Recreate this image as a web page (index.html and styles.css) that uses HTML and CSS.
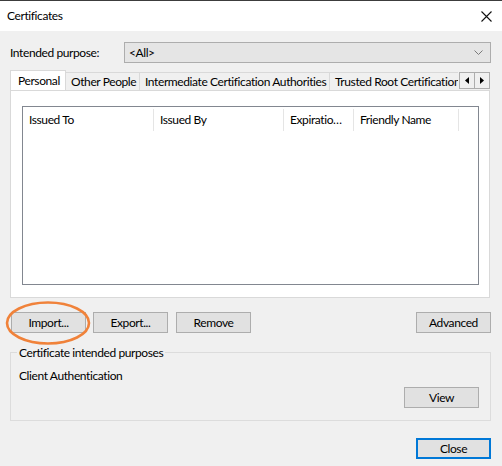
FILE: index.html
```html
<!DOCTYPE html>
<html>
<head>
<meta charset="utf-8">
<title>Certificates</title>
<link rel="stylesheet" href="styles.css">
</head>
<body>
<div class="window">
  <div class="titlebar">
    <span class="title">Certificates</span>
    <svg class="close-x" width="11" height="11" viewBox="0 0 11 11"><path d="M0.5 0.5 L10.5 10.5 M10.5 0.5 L0.5 10.5" stroke="#111" stroke-width="1.1" fill="none"/></svg>
  </div>
  <div class="main">
    <div class="purpose-row">
      <span class="purpose-label">Intended purpose:</span>
      <div class="combo">
        <span>&lt;All&gt;</span>
        <svg class="chev" width="9" height="5" viewBox="0 0 9 5"><path d="M0.5 0.5 L4.5 4.5 L8.5 0.5" stroke="#7a7a7a" stroke-width="1" fill="none"/></svg>
      </div>
    </div>
    <div class="tabstrip">
      <div class="tabs">
        <div class="tab tab-active w-personal">Personal</div>
        <div class="tab w-other">Other People</div>
        <div class="tab w-inter">Intermediate Certification Authorities</div>
        <div class="tab w-trusted">Trusted Root Certification Authorities</div>
      </div>
      <div class="arrows">
        <div class="arrow"><svg width="4" height="7" viewBox="0 0 4 7"><path d="M4 0 L0 3.5 L4 7 Z" fill="#000"/></svg></div>
        <div class="arrow"><svg width="4" height="7" viewBox="0 0 4 7"><path d="M0 0 L4 3.5 L0 7 Z" fill="#000"/></svg></div>
      </div>
    </div>
    <div class="panel">
      <div class="list">
        <div class="list-header">
          <div class="col c1">Issued To</div>
          <div class="col c2">Issued By</div>
          <div class="col c3">Expiratio…</div>
          <div class="col c4">Friendly Name</div>
        </div>
      </div>
    </div>
    <div class="button-row">
      <div class="import-wrap">
        <button class="btn">Import...</button>
        <svg class="highlight" width="90" height="46" viewBox="0 0 90 46"><ellipse cx="43" cy="22" rx="41" ry="20.5" fill="none" stroke="#f0823a" stroke-width="2.6"/></svg>
      </div>
      <button class="btn btn-export">Export...</button>
      <button class="btn btn-remove">Remove</button>
      <span class="spacer"></span>
      <button class="btn">Advanced</button>
    </div>
    <div class="group">
      <div class="group-title">Certificate intended purposes</div>
      <div class="group-text">Client Authentication</div>
      <div class="group-actions">
        <button class="btn">View</button>
      </div>
    </div>
    <div class="footer">
      <button class="btn btn-default">Close</button>
    </div>
  </div>
</div>
</body>
</html>
```
FILE: styles.css
```css
* { box-sizing: border-box; }
html, body { margin: 0; padding: 0; }
body {
  width: 502px;
  height: 466px;
  overflow: hidden;
  background: #f0f0f0;
  font-family: "Lato", "Liberation Sans", sans-serif;
  font-size: 12px;
  letter-spacing: -0.4px;
  color: #000;
}
.window { width: 502px; height: 466px; }
.titlebar {
  height: 31px;
  border-top: 1px solid #3c3c3c;
  background: #fff;
  display: flex;
  align-items: center;
  padding-left: 7px;
  padding-right: 10px;
}
.title { flex: 1; line-height: 16px; }
.close-x { display: block; margin-top: 1px; }
.main { padding: 0 11px 0 10px; }
.purpose-row {
  margin-top: 11px;
  display: flex;
  align-items: center;
  height: 21px;
}
.purpose-label { width: 114px; line-height: 16px; }
.combo {
  flex: 1;
  height: 21px;
  border: 1px solid #adadad;
  background: #e5e5e5;
  display: flex;
  align-items: center;
  padding-left: 4px;
  padding-right: 7px;
}
.combo span { flex: 1; }
.chev { display: block; }
.tabstrip {
  margin-top: 7px;
  display: flex;
  width: 480px;
  height: 20px;
  position: relative;
  z-index: 1;
}
.tabs {
  width: 449px;
  display: flex;
  align-items: flex-end;
  overflow: hidden;
}
.tab {
  flex: none;
  height: 18px;
  border: 1px solid #d9d9d9;
  border-bottom: none;
  border-left: none;
  background: #f0f0f0;
  line-height: 17px;
  padding-left: 5px;
  white-space: nowrap;
}
.tab-active {
  height: 21px;
  margin-bottom: -1px;
  border-left: 1px solid #d9d9d9;
  background: #fff;
  padding-left: 7px;
  line-height: 20px;
}
.w-personal { width: 56px; }
.w-other { width: 74px; }
.w-inter { width: 190px; }
.w-trusted { width: 160px; }
.arrows {
  display: flex;
  margin-top: 2px;
  margin-left: 1px;
  height: 17px;
}
.arrow {
  width: 16px;
  height: 17px;
  border: 1px solid #adadad;
  background: #f0f0f0;
  display: flex;
  align-items: center;
  justify-content: center;
}
.arrow + .arrow { margin-left: -1px; width: 16px; }
.panel {
  width: 480px;
  height: 208px;
  border: 1px solid #d9d9d9;
  background: #fff;
  padding: 15px 10px 12px 11px;
}
.list {
  height: 179px;
  border: 1px solid #828790;
  background: #fff;
}
.list-header {
  display: flex;
  margin-top: 2px;
}
.col {
  height: 22px;
  line-height: 22px;
  padding-left: 6px;
  border-right: 1px solid #e5e5e5;
  white-space: nowrap;
  overflow: hidden;
}
.c1 { width: 131px; }
.c2 { width: 130px; }
.c3 { width: 70px; }
.c4 { width: 105px; }
.button-row {
  margin-top: 14px;
  display: flex;
  align-items: center;
  padding-left: 1px;
}
.btn {
  width: 75px;
  height: 21px;
  border: 1px solid #adadad;
  background: #e1e1e1;
  font-family: inherit;
  font-size: 12px;
  letter-spacing: inherit;
  color: #000;
  padding: 0;
  line-height: 17px;
}
.import-wrap { position: relative; }
.import-wrap .btn { display: block; }
.highlight {
  position: absolute;
  left: -6px;
  top: -11px;
  pointer-events: none;
}
.btn-export { margin-left: 7px; }
.btn-remove { margin-left: 8px; }
.spacer { flex: 1; }
.group {
  margin-top: 19px;
  border: 1px solid #dcdcdc;
  padding: 0 11px 12px 6px;
}
.group-title {
  width: max-content;
  margin-top: -8px;
  padding: 0 2px;
  background: #f0f0f0;
  line-height: 16px;
}
.group-text {
  margin-top: 7px;
  padding-left: 2px;
  line-height: 16px;
}
.group-actions {
  display: flex;
  justify-content: flex-end;
  margin-top: 3px;
}
.footer {
  margin-top: 17px;
  display: flex;
  justify-content: flex-end;
}
.btn-default { border: 2px solid #0078d7; }
```
